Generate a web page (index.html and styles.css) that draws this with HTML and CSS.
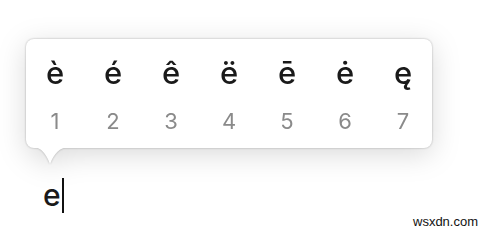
FILE: index.html
```html
<!DOCTYPE html>
<html lang="en">

<head>
    <meta charset="UTF-8" />
    <title>Accent Menu</title>
    <link rel="stylesheet" href="styles.css">
</head>

<body>

    <div class="page">
        <div class="popup">
            <div class="row chars">
                <span>è</span><span>é</span><span>ê</span><span>ë</span><span>ē</span><span>ė</span><span>ę</span>
            </div>
            <div class="row nums">
                <span>1</span><span>2</span><span>3</span><span>4</span><span>5</span><span>6</span><span>7</span>
            </div>
            <svg class="tail" width="34" height="18" viewBox="0 0 34 18">
                <path d="M0,0 Q10,1 16,17 Q22,1 34,0 Z" fill="#fff" />
            </svg>
        </div>

        <div class="input">e<span class="caret"></span></div>
    </div>

    <div class="mark">wsxdn.com</div>

</body>

</html>
```

FILE: styles.css
```css
* {
    box-sizing: border-box;
    margin: 0;
    padding: 0;
}

html,
body {
    width: 486px;
    height: 234px;
    overflow: hidden;
    background: #fff;
    font-family: Inter, "Liberation Sans", sans-serif;
}

.page {
    padding: 39px 0 0 26px;
}

.popup {
    position: relative;
    width: 406px;
    height: 109px;
    background: #fff;
    border-radius: 8px;
    padding-top: 12px;
    filter: drop-shadow(0 0 1px rgba(0, 0, 0, 0.28)) drop-shadow(0 6px 14px rgba(0, 0, 0, 0.15));
}

.row {
    display: grid;
    grid-template-columns: repeat(7, 1fr);
    text-align: center;
}

.chars {
    font-size: 31px;
    font-weight: 500;
    line-height: 44px;
    color: #1a1a1a;
}

.nums {
    font-size: 22px;
    line-height: 40px;
    padding-top: 6px;
    color: #8a8a8a;
}

.tail {
    position: absolute;
    left: 8px;
    top: 108px;
    display: block;
}

.input {
    margin: 30px 0 0 17px;
    font-size: 30px;
    font-weight: 500;
    line-height: 35px;
    color: #1a1a1a;
    display: flex;
    align-items: center;
}

.caret {
    display: inline-block;
    width: 2px;
    height: 35px;
    margin-left: 1px;
    background: #111;
}

.mark {
    position: absolute;
    left: 413px;
    top: 214px;
    font-family: "Liberation Sans", Arial, sans-serif;
    font-size: 13px;
    color: #111;
}
```
